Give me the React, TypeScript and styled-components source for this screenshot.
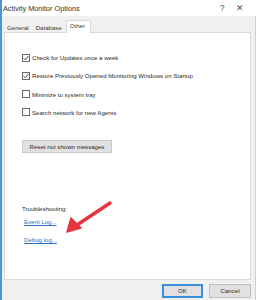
import React from 'react';
import styled, {createGlobalStyle} from 'styled-components';

const Global = createGlobalStyle`
  html, body {
    margin: 0;
    padding: 0;
    background: #ffffff;
  }
  body {
    font-family: "Liberation Sans", Arial, sans-serif;
    font-size: 6.1px;
    color: #2a2a2a;
  }
`;

const Window = styled.div`
  position: relative;
  width: 256px;
  height: 300px;
  box-sizing: border-box;
  border-left: 2px solid #4a95db;
  background: #f0f0f0;
  display: flex;
  flex-direction: column;
  overflow: hidden;
`;

const TitleBar = styled.div`
  height: 16px;
  background: #ffffff;
  display: flex;
  align-items: center;
  padding-left: 1px;
  padding-right: 8px;
`;

const Title = styled.span`
  flex: 1;
  font-size: 7.3px;
  color: #333;
`;

const TitleButton = styled.span<{$width: number}>`
  width: ${(p) => p.$width}px;
  text-align: center;
  font-size: 8.5px;
  color: #555;
`;

const Body = styled.div`
  flex: 1;
  display: flex;
  flex-direction: column;
  padding: 3px 4px 0 2px;
  border-right: 1px solid #d0d0d0;
`;

const Tabs = styled.div`
  display: flex;
  align-items: flex-end;
  height: 13px;
`;

const Tab = styled.div<{$active?: boolean}>`
  padding: 0 ${(p) => (p.$active ? 5 : 3)}px 0 ${(p) => (p.$active ? 3 : 2)}px;
  height: ${(p) => (p.$active ? 13 : 11)}px;
  line-height: ${(p) => (p.$active ? 10 : 11)}px;
  background: ${(p) => (p.$active ? '#ffffff' : 'transparent')};
  border: 1px solid ${(p) => (p.$active ? '#dadada' : 'transparent')};
  border-bottom: none;
  box-sizing: border-box;
  margin-bottom: ${(p) => (p.$active ? -1 : 0)}px;
  position: relative;
  z-index: ${(p) => (p.$active ? 1 : 0)};
  color: #3a3a3a;
`;

const Panel = styled.div`
  height: 248px;
  background: #ffffff;
  border: 1px solid #dadada;
  box-sizing: border-box;
  padding: 20px 0 0 17px;
  display: flex;
  flex-direction: column;
`;

const CheckRow = styled.label`
  display: flex;
  align-items: center;
  gap: 2px;
  height: 9px;
  margin-bottom: 9.3px;
`;

const Box = styled.span`
  width: 8px;
  height: 8px;
  box-sizing: border-box;
  border: 1px solid #6a6a6a;
  background: #fff;
  display: flex;
  align-items: center;
  justify-content: center;
`;

const ResetButton = styled.button`
  margin-top: 14px;
  width: 90px;
  height: 13px;
  padding: 0;
  background: #e1e1e1;
  border: 1px solid #cacaca;
  font-family: inherit;
  font-size: 6.1px;
  color: #2a2a2a;
`;

const Section = styled.div`
  margin-top: 51px;
  display: flex;
  flex-direction: column;
`;

const Caption = styled.div`
  height: 9px;
  line-height: 9px;
`;

const LogLink = styled.a<{$space: number}>`
  margin: ${(p) => p.$space}px 0 0 2px;
  height: 10px;
  line-height: 10px;
  color: #2a6fd0;
  text-decoration: underline;
  align-self: flex-start;
`;

const Footer = styled.div`
  flex: 1;
  display: flex;
  justify-content: flex-end;
  align-items: center;
  gap: 6px;
  padding-top: 1px;
`;

const DialogButton = styled.button<{$default?: boolean}>`
  width: ${(p) => (p.$default ? 41 : 42)}px;
  height: 14px;
  padding: 0;
  font-family: inherit;
  font-size: 6.1px;
  color: #2a2a2a;
  background: #e1e1e1;
  border: 1px solid ${(p) => (p.$default ? '#3a8fdc' : '#c0c0c0')};
  box-shadow: ${(p) => (p.$default ? 'inset 0 0 0 1px #3a8fdc' : 'none')};
`;

const Arrow = styled.svg`
  position: absolute;
  left: 60px;
  top: 198px;
`;

const Check = ({checked}: {checked: boolean}) => (
  <Box>
    {checked && (
      <svg width="6" height="6" viewBox="0 0 6 6">
        <path d="M0.6 3.1 L2.3 4.8 L5.4 1" stroke="#444" strokeWidth="1" fill="none" />
      </svg>
    )}
  </Box>
);

const options = [
  {label: 'Check for Updates once a week', checked: true},
  {label: 'Restore Previously Opened Monitoring Windows on Startup', checked: true},
  {label: 'Minimize to system tray', checked: false},
  {label: 'Search network for new Agents', checked: false}
];

const App = () => (
  <Window>
    <Global />
    <TitleBar>
      <Title>Activity Monitor Options</Title>
      <TitleButton $width={20}>?</TitleButton>
      <TitleButton $width={16}>✕</TitleButton>
    </TitleBar>
    <Body>
      <Tabs>
        <Tab>General</Tab>
        <Tab>Database</Tab>
        <Tab $active>Other</Tab>
      </Tabs>
      <Panel>
        {options.map((o) => (
          <CheckRow key={o.label}>
            <Check checked={o.checked} />
            <span>{o.label}</span>
          </CheckRow>
        ))}
        <ResetButton>Reset not shown messages</ResetButton>
        <Section>
          <Caption>Troubleshooting:</Caption>
          <LogLink href="#" $space={4}>Event Log...</LogLink>
          <LogLink href="#" $space={8}>Debug log...</LogLink>
        </Section>
      </Panel>
      <Footer>
        <DialogButton $default>OK</DialogButton>
        <DialogButton>Cancel</DialogButton>
      </Footer>
    </Body>
    <Arrow width="52" height="38" viewBox="0 0 52 38">
      <path d="M48 5 L15 27" stroke="#e8333d" strokeWidth="3.4" strokeLinecap="round" fill="none" />
      <path d="M5 34 L9 20 L19 30 Z" fill="#e8333d" stroke="#e8333d" strokeWidth="1.5" strokeLinejoin="round" />
    </Arrow>
  </Window>
);

export default App;
